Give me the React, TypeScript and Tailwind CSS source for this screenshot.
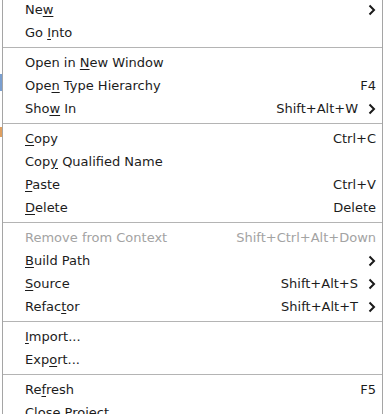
import React from "react";

type Item =
  | { sep: true }
  | {
      sep?: false;
      label: string;
      u?: number; // index of mnemonic letter
      key?: string;
      sub?: boolean;
      disabled?: boolean;
    };

const items: Item[] = [
  { label: "New", u: 2, sub: true },
  { label: "Go Into", u: 3 },
  { sep: true },
  { label: "Open in New Window", u: 8 },
  { label: "Open Type Hierarchy", u: 3, key: "F4" },
  { label: "Show In", u: 3, key: "Shift+Alt+W", sub: true },
  { sep: true },
  { label: "Copy", u: 0, key: "Ctrl+C" },
  { label: "Copy Qualified Name", u: 3 },
  { label: "Paste", u: 0, key: "Ctrl+V" },
  { label: "Delete", u: 0, key: "Delete" },
  { sep: true },
  { label: "Remove from Context", key: "Shift+Ctrl+Alt+Down", disabled: true },
  { label: "Build Path", u: 0, sub: true },
  { label: "Source", u: 0, key: "Shift+Alt+S", sub: true },
  { label: "Refactor", u: 5, key: "Shift+Alt+T", sub: true },
  { sep: true },
  { label: "Import...", u: 0 },
  { label: "Export...", u: 3 },
  { sep: true },
  { label: "Refresh", u: 2, key: "F5" },
  { label: "Close Project" },
];

const Chevron = () => (
  <svg width="8" height="12" viewBox="0 0 8 12" className="shrink-0">
    <path d="M1.5 1.5 L6 6 L1.5 10.5" fill="none" stroke="#1a1a1a" strokeWidth="2" />
  </svg>
);

const Label = ({ text, u }: { text: string; u?: number }) => {
  if (u === undefined) return <span>{text}</span>;
  return (
    <span>
      {text.slice(0, u)}
      <span className="underline underline-offset-[2px] decoration-1">{text[u]}</span>
      {text.slice(u + 1)}
    </span>
  );
};

export default function App() {
  return (
    <div
      className="flex w-[384px] h-[414px] overflow-hidden bg-white text-[13px] text-[#1c1c1c]"
      style={{ fontFamily: '"DejaVu Sans", sans-serif' }}
    >
      {/* sliver of the window behind the menu */}
      <div className="w-[2px] shrink-0 flex flex-col bg-white">
        <div className="h-[74px] shrink-0" />
        <div className="h-[17px] shrink-0 bg-[#7a9fd0]" />
        <div className="h-[36px] shrink-0" />
        <div className="h-[10px] shrink-0 bg-[#e0a060]" />
      </div>

      {/* context menu */}
      <div className="w-[381px] shrink-0 border-x border-[#a5a5a5] bg-white flex flex-col -mt-[2px]">
        {items.map((it, i) =>
          it.sep ? (
            <div key={i} className="h-[7px] shrink-0 flex items-center">
              <div className="h-px w-full bg-[#b4b4b4]" />
            </div>
          ) : (
            <div
              key={i}
              className={`h-[23px] shrink-0 flex items-center pl-[22px] pr-[6px] ${
                it.disabled ? "text-[#a3a3a3]" : ""
              }`}
            >
              <div className="flex-1 whitespace-nowrap">
                <Label text={it.label} u={it.u} />
              </div>
              {it.key && <div className="whitespace-nowrap">{it.key}</div>}
              {it.sub && (
                <div className="w-[18px] flex justify-end">
                  <Chevron />
                </div>
              )}
            </div>
          )
        )}
      </div>
      <div className="w-px shrink-0 bg-white" />
    </div>
  );
}
